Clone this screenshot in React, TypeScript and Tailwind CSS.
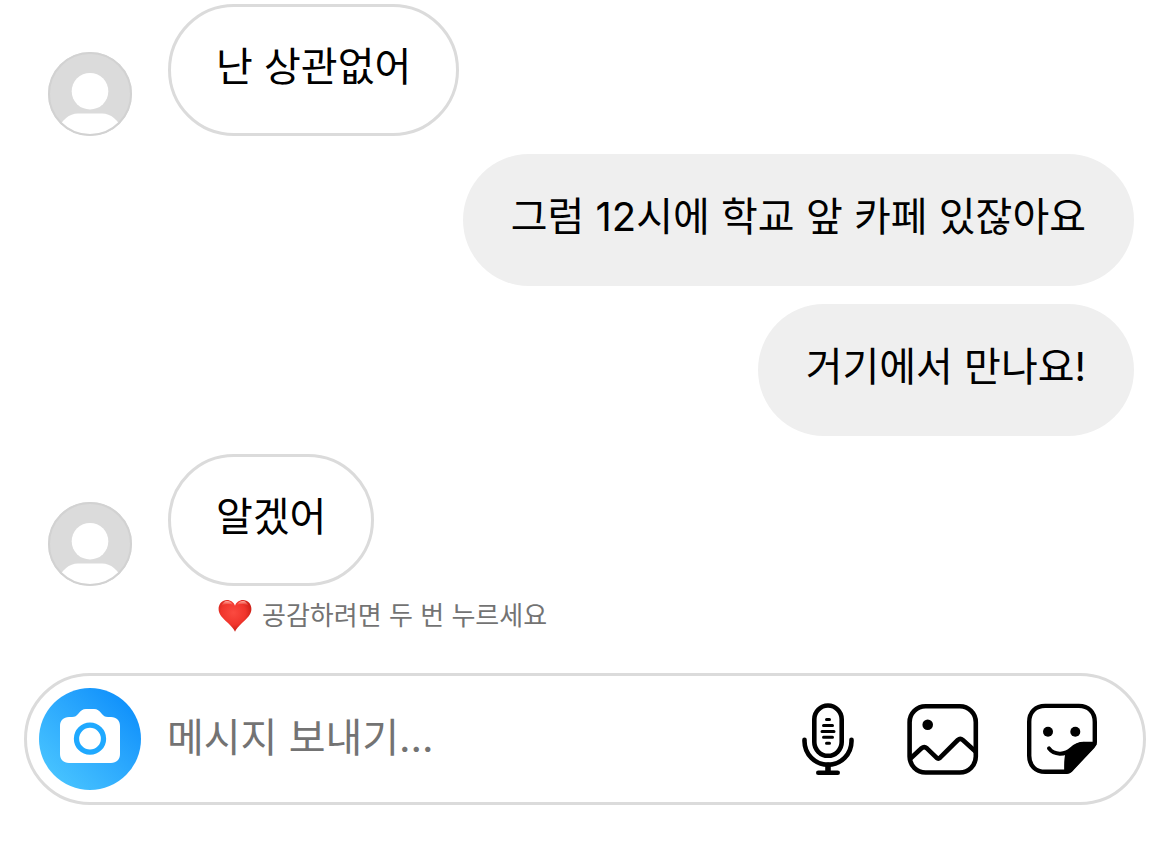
import { useId, useState } from "react";

type Message = {
    id: number;
    text: string;
    mine: boolean;
};

const messages: Message[] = [
    { id: 1, text: "난 상관없어", mine: false },
    { id: 2, text: "그럼 12시에 학교 앞 카페 있잖아요", mine: true },
    { id: 3, text: "거기에서 만나요!", mine: true },
    { id: 4, text: "알겠어", mine: false },
];

function Avatar() {
    const clipId = useId();

    return (
        <svg viewBox="0 0 84 84" className="size-[84px] shrink-0" aria-hidden="true">
            <clipPath id={clipId}>
                <circle cx="42" cy="42" r="41" />
            </clipPath>
            <circle cx="42" cy="42" r="42" fill="#dbdbdb" />
            <g clipPath={`url(#${clipId})`} fill="#fff">
                <circle cx="42" cy="39.2" r="18.3" />
                <path d="M10 84V77C14 68 21 61.5 30 61.5H54C63 61.5 70 68 74 77V84Z" />
            </g>
            <circle cx="42" cy="42" r="41" fill="none" stroke="#d2d2d2" strokeWidth="2" />
        </svg>
    );
}

function Heart() {
    return (
        <svg viewBox="0 0 34 34" className="size-[34px] shrink-0" aria-hidden="true">
            <defs>
                <radialGradient id="heart-fill" cx="0.45" cy="0.4" r="0.62">
                    <stop offset="0" stopColor="#fb4a40" />
                    <stop offset="0.6" stopColor="#f0352c" />
                    <stop offset="1" stopColor="#c41a12" />
                </radialGradient>
                <linearGradient id="heart-shine" x1="0" y1="0" x2="0" y2="1">
                    <stop offset="0" stopColor="#ffb3a9" />
                    <stop offset="1" stopColor="#ff6a5c" stopOpacity="0" />
                </linearGradient>
            </defs>
            <path
                d="M17 32.8C16 30 13.5 27.6 10 24C4.5 18.8 .6 15.6 .6 10C.6 4.8 4.3 1 9 1C12.7 1 15.8 3.2 17 6.8C18.2 3.2 21.3 1 25 1C29.700 1 33.400 4.800 33.400 10C33.400 15.600 29.500 18.800 24 24C20.500 27.600 18 30 17 32.800Z"
                fill="url(#heart-fill)"
            />
            <path d="M3.4 7C4.4 4 6.5 2 9 2C11.7 2 13.8 3.4 15 6C12 4.6 6.8 4.6 3.4 7Z" fill="url(#heart-shine)" />
            <path d="M19 6C20.2 3.4 22.3 2 25 2C27.5 2 29.6 4 30.6 7C27.2 4.6 22 4.6 19 6Z" fill="url(#heart-shine)" />
        </svg>
    );
}

function CameraIcon() {
    return (
        <svg viewBox="0 0 102 102" className="size-full" aria-hidden="true">
            <path
                d="M30 29H33C36 29 37.5 28 39.5 25.5C42 22.5 43.5 21 47 21H55C58.5 21 60 22.5 62.5 25.5C64.5 28 66 29 69 29H72C77.5 29 81 32.5 81 38V66C81 71.5 77.5 75 72 75H30C24.5 75 21 71.5 21 66V38C21 32.5 24.5 29 30 29Z"
                fill="#fff"
            />
            <circle cx="51" cy="50.7" r="13.5" fill="none" stroke="#1fa9ff" strokeWidth="5.3" />
        </svg>
    );
}

function MicIcon() {
    return (
        <svg viewBox="0 0 74 74" className="size-full" fill="none" stroke="currentColor" strokeLinecap="round" aria-hidden="true">
            <g strokeWidth="4.6">
                <rect x="25.3" y="3.5" width="27.4" height="50.3" rx="13.7" />
                <path d="M15.5 37.8V39.2A23.5 23.5 0 0 0 62.5 39.2V37.8" />
                <path strokeWidth="5.6" d="M39 63V70" />
                <path d="M29.3 70.7H48.7" />
            </g>
            <path strokeWidth="3" d="M37.5 17.6H40.5M34.5 23.4H43.5M33 29.4H45M34.5 35.3H43.5M37.5 41.3H40.5" />
        </svg>
    );
}

function PhotoIcon() {
    return (
        <svg viewBox="0 0 74 74" className="size-full" fill="none" stroke="currentColor" strokeWidth="4.6" aria-hidden="true">
            <rect x="2.6" y="4.3" width="66.2" height="66.2" rx="16" />
            <circle cx="20.7" cy="22.7" r="5.3" fill="currentColor" stroke="none" />
            <path
                strokeLinejoin="round"
                d="M3.5 56.5L14.5 46.3Q17.2 44 19.9 46.3L29.5 55.7Q31.3 57.3 33.1 55.7L50.8 38Q53.3 35.8 55.8 38L68.5 49.5"
            />
        </svg>
    );
}

function StickerIcon() {
    return (
        <svg viewBox="0 0 74 74" className="size-full" fill="none" stroke="currentColor" strokeWidth="4.4" strokeLinecap="round" strokeLinejoin="round" aria-hidden="true">
            <path d="M42 69.8H20.2C10.5 69.8 4.2 63.5 4.2 53.8V19.9C4.2 10.2 10.5 3.9 20.2 3.9H53.8C63.5 3.9 69.8 10.2 69.8 19.9V40C69.8 42 69.3 43 68 44.3L47 66.5C45.3 68.6 44 69.8 42 69.8Z" />
            <g fill="currentColor" stroke="none">
                <circle cx="23" cy="29.8" r="5" />
                <circle cx="50.3" cy="29.8" r="5" />
                <path d="M39.2 69.5C39 62 39.2 57.5 40.2 52C45 48 48 40 60 39.8H71.5V42.5L68.5 46L47.5 68.5L44 71Z" />
            </g>
            <path strokeWidth="4" d="M24 46.4C29 53.2 40 53.4 46.5 47C50 43.5 53 41.7 59 41.7" />
        </svg>
    );
}

function Bubble({ text, mine }: { text: string; mine: boolean }) {
    return (
        <p
            className={
                mine
                    ? "rounded-[66px] bg-[#efefef] px-12 pt-[35px] pb-[41px] text-[40px] leading-14"
                    : "rounded-[66px] border-3 border-[#dbdbdb] px-[45px] pt-8 pb-[38px] text-[40px] leading-14"
            }
        >
            {text}
        </p>
    );
}

export default function App() {
    const [draft, setDraft] = useState("");

    return (
        <main className="bg-white text-black font-['Inter','Noto_Sans_CJK_KR',sans-serif]">
            {/* Conversation */}
            <ul className="flex flex-col gap-[18px] pt-1 pl-12 pr-9">
                {messages.map((m) => (
                    <li key={m.id} className={m.mine ? "flex justify-end" : "flex items-end gap-9"}>
                        {!m.mine && <Avatar />}
                        <Bubble text={m.text} mine={m.mine} />
                    </li>
                ))}
            </ul>

            {/* Reaction hint */}
            <div className="mt-3 ml-[218px] flex items-center gap-2.5 text-[26px] leading-9 text-[#737373]">
                <Heart />
                <span>공감하려면 두 번 누르세요</span>
            </div>

            {/* Composer */}
            <form
                onSubmit={(e) => {
                    e.preventDefault();
                    setDraft("");
                }}
                className="mx-6 mt-[39px] flex h-33 items-center rounded-full border-3 border-[#dbdbdb] pl-3 pr-11"
            >
                <button type="button" aria-label="카메라" className="size-[102px] shrink-0 rounded-full bg-linear-to-tr from-[#4fcbff] to-[#0088fa]">
                    <CameraIcon />
                </button>
                <input
                    type="text"
                    aria-label="메시지 보내기"
                    value={draft}
                    onChange={(e) => setDraft(e.target.value)}
                    placeholder="메시지 보내기..."
                    className="ml-[26px] h-16 min-w-0 flex-1 bg-transparent pb-1 text-[40px] outline-none placeholder:text-[#737373]"
                />
                <div className="flex shrink-0 gap-11">
                    <button type="button" aria-label="음성 메시지" className="size-[74px]">
                        <MicIcon />
                    </button>
                    <button type="button" aria-label="사진" className="size-[74px]">
                        <PhotoIcon />
                    </button>
                    <button type="button" aria-label="스티커" className="size-[74px]">
                        <StickerIcon />
                    </button>
                </div>
            </form>
        </main>
    );
}
